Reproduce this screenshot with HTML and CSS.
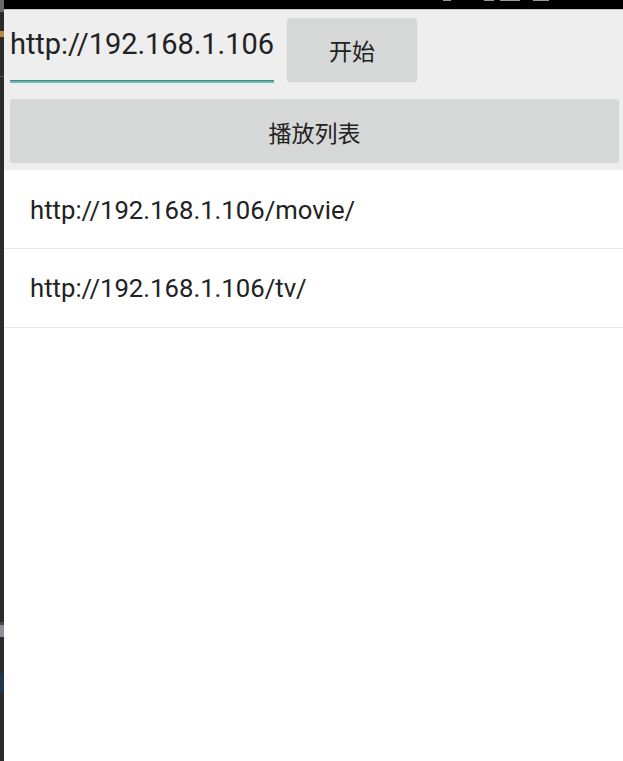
FILE: index.html
```html
<!DOCTYPE html>
<html lang="zh">
<head>
<meta charset="utf-8">
<title>播放列表</title>
<link rel="stylesheet" href="styles.css">
</head>
<body>
<div class="screen">
  <div class="edge">
    <span class="edge-top"></span>
    <span class="edge-dark edge-a"></span>
    <span class="edge-orange"></span>
    <span class="edge-dark edge-b"></span>
    <span class="edge-line"></span>
    <span class="edge-dark edge-c"></span>
    <span class="edge-line2"></span>
    <span class="edge-icon"></span>
    <span class="edge-dark edge-d"></span>
    <span class="edge-blue"></span>
    <span class="edge-dark edge-e"></span>
  </div>
  <div class="app">
    <div class="statusbar">
      <span class="sb-bit sb-1"></span>
      <span class="sb-bit sb-2"></span>
      <span class="sb-bit sb-3"></span>
      <span class="sb-bit sb-4"></span>
    </div>
    <div class="header">
      <div class="row">
        <input class="url" type="text" value="http://192.168.1.106">
        <button class="btn btn-start">开始</button>
      </div>
      <button class="btn btn-list">播放列表</button>
    </div>
    <ul class="list">
      <li class="item">http://192.168.1.106/movie/</li>
      <li class="item">http://192.168.1.106/tv/</li>
    </ul>
  </div>
</div>
</body>
</html>
```
FILE: styles.css
```css
html, body {
  margin: 0;
  padding: 0;
  height: 100%;
  background: #ffffff;
}
.screen {
  display: flex;
  height: 761px;
  width: 623px;
  overflow: hidden;
}
.edge {
  width: 4px;
  flex: 0 0 4px;
  display: flex;
  flex-direction: column;
  background: #2b2b2b;
}
.edge span { display: block; }
.edge-top { height: 12px; background: #6a6a6a; }
.edge-dark { background: #2b2b2b; }
.edge-a { height: 19px; }
.edge-orange { height: 6px; background: #c08a3a; }
.edge-b { height: 39px; }
.edge-line { height: 1px; background: #555; }
.edge-c { height: 545px; }
.edge-line2 { height: 3px; background: #4a4a4a; }
.edge-icon { height: 12px; background: #8a8f99; }
.edge-d { height: 36px; }
.edge-blue { height: 20px; background: #1f3550; }
.edge-e { flex: 1; }

.app {
  flex: 1;
  display: flex;
  flex-direction: column;
  font-family: Roboto, "Noto Sans CJK SC", sans-serif;
  color: #222222;
}
.statusbar {
  height: 9px;
  background: #000000;
  border-bottom: 1px solid #c8c8c8;
  display: flex;
  align-items: flex-start;
  padding-left: 439px;
}
.sb-bit {
  display: block;
  height: 1px;
  background: #9a9a9a;
}
.sb-1 { width: 8px; }
.sb-2 { width: 10px; margin-left: 33px; }
.sb-3 { width: 20px; margin-left: 6px; }
.sb-4 { width: 16px; margin-left: 13px; }

.header {
  background: #eeeeee;
  padding: 0 4px 8px 6px;
  display: flex;
  flex-direction: column;
}
.row {
  display: flex;
  align-items: flex-start;
}
.url {
  width: 264px;
  height: 73px;
  box-sizing: border-box;
  margin: 0;
  padding: 0 0 3px 0;
  border: none;
  border-bottom: 2px solid #6dbbb2;
  box-shadow: inset 0 -1px 0 #3f8780;
  background: transparent;
  font-family: Roboto, sans-serif;
  font-size: 29px;
  letter-spacing: -0.05px;
  color: #222222;
  outline: none;
}
.btn {
  border: none;
  margin: 0;
  padding: 0;
  background: #d6d7d7;
  border-radius: 3px;
  box-shadow: 0 1px 1px rgba(0, 0, 0, 0.12);
  font-family: "Noto Sans CJK SC", sans-serif;
  font-size: 23px;
  color: #222222;
  cursor: pointer;
}
.btn-start {
  width: 130px;
  height: 63px;
  margin-top: 8px;
  margin-left: 13px;
  padding-top: 0;
}
.btn-list {
  height: 63px;
  margin-top: 16px;
  width: 100%;
  padding-top: 3px;
}

.list {
  list-style: none;
  margin: 0;
  padding: 0;
  background: #ffffff;
}
.item {
  height: 78px;
  box-sizing: content-box;
  border-bottom: 1px solid #e6e6e6;
  display: flex;
  align-items: center;
  padding-left: 26px;
  padding-top: 0;
  font-family: Roboto, sans-serif;
  font-size: 25.7px;
  color: #222222;
}
.item:first-child {
  padding-top: 2px;
  height: 76px;
}
.item:first-child {
  align-items: center;
}
```
